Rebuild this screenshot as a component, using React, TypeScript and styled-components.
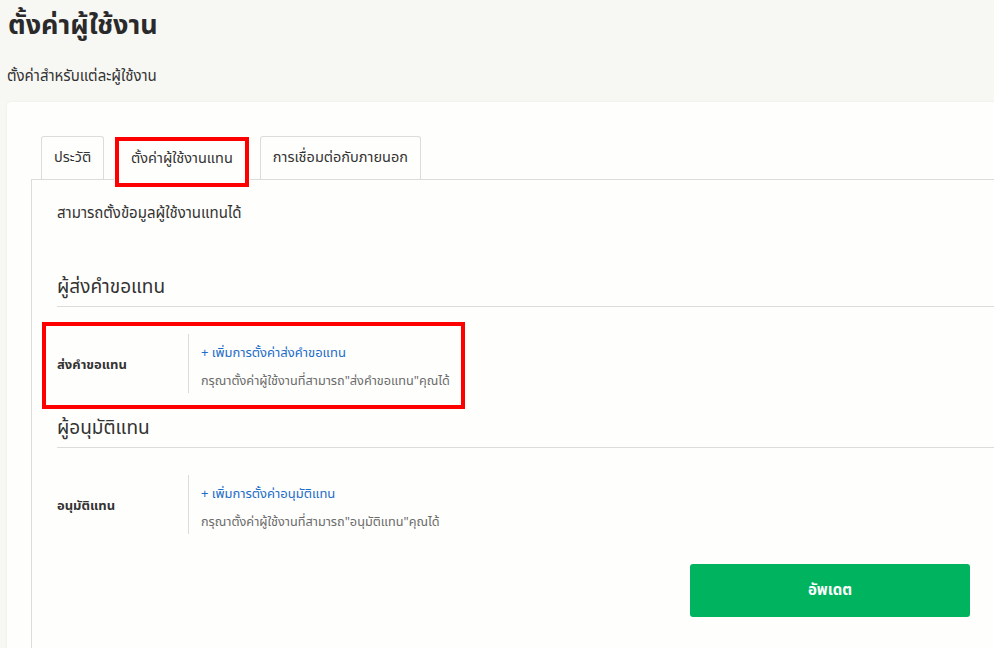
import React from 'react';
import styled, { createGlobalStyle } from 'styled-components';

const colors = {
    page: '#f7f7f4',
    card: '#fefefc',
    text: '#333333',
    hint: '#6b6b6b',
    line: '#dcdcdc',
    link: '#1d6cc8',
    green: '#00b35f',
    mark: '#ff0000',
};

const GlobalStyle = createGlobalStyle`
    html, body {
        margin: 0;
        padding: 0;
        background: ${colors.page};
        overflow: hidden;
    }
    body {
        font-family: Tahoma, "Noto Sans Thai", "Noto Sans", "DejaVu Sans", sans-serif;
        color: ${colors.text};
    }
`;

interface DelegateRowProps {
    label: string;
    linkText: string;
    hint: string;
    marked?: boolean;
}

const DelegateRow = ({ label, linkText, hint, marked }: DelegateRowProps) => (
    <Row $marked={marked}>
        <RowLabel>{label}</RowLabel>
        <RowBody>
            <AddLink href="#">+ {linkText}</AddLink>
            <Hint>{hint}</Hint>
        </RowBody>
    </Row>
);

const tabs = ['ประวัติ', 'ตั้งค่าผู้ใช้งานแทน', 'การเชื่อมต่อกับภายนอก'];

const App = () => {
    return (
        <Page>
            <GlobalStyle />
            <Title>ตั้งค่าผู้ใช้งาน</Title>
            <Subtitle>ตั้งค่าสำหรับแต่ละผู้ใช้งาน</Subtitle>
            <Card>
                <TabList>
                    {tabs.map((t, i) => (
                        <Tab key={t} $active={i === 1}>
                            {t}
                        </Tab>
                    ))}
                </TabList>
                <Panel>
                    <Intro>สามารถตั้งข้อมูลผู้ใช้งานแทนได้</Intro>
                    <SectionTitle>ผู้ส่งคำขอแทน</SectionTitle>
                    <DelegateRow
                        marked
                        label="ส่งคำขอแทน"
                        linkText="เพิ่มการตั้งค่าส่งคำขอแทน"
                        hint={'กรุณาตั้งค่าผู้ใช้งานที่สามารถ"ส่งคำขอแทน"คุณได้'}
                    />
                    <SectionTitle $tight>ผู้อนุมัติแทน</SectionTitle>
                    <DelegateRow
                        label="อนุมัติแทน"
                        linkText="เพิ่มการตั้งค่าอนุมัติแทน"
                        hint={'กรุณาตั้งค่าผู้ใช้งานที่สามารถ"อนุมัติแทน"คุณได้'}
                    />
                    <ButtonRow>
                        <UpdateButton>อัพเดต</UpdateButton>
                    </ButtonRow>
                </Panel>
            </Card>
        </Page>
    );
};

export default App;

const Page = styled.div`
    padding: 0 0 0 7px;
    height: 648px;
    overflow: hidden;
`;

const Title = styled.h1`
    margin: 0;
    padding: 10px 0 0 1px;
    font-size: 27px;
    font-weight: 700;
    line-height: 32px;
    color: #2a2a2a;
`;

const Subtitle = styled.p`
    margin: 0;
    padding-top: 26px;
    font-size: 15px;
    line-height: 18px;
`;

const Card = styled.div`
    margin-top: 16px;
    width: 1030px;
    background: ${colors.card};
    border-radius: 4px;
    box-shadow: 0 0 2px rgba(0, 0, 0, 0.08);
    padding: 34px 0 0 24px;
    box-sizing: border-box;
    height: 560px;
`;

const TabList = styled.div`
    display: flex;
    gap: 10px;
    padding-left: 10px;
    height: 43px;
`;

const Tab = styled.div<{ $active?: boolean }>`
    position: relative;
    display: flex;
    align-items: center;
    padding: 0 ${(p) => (p.$active ? '16px' : '12px')};
    font-size: 14.5px;
    border: 1px solid ${(p) => (p.$active ? 'transparent' : colors.line)};
    border-bottom: none;
    border-radius: 3px 3px 0 0;
    background: ${colors.card};
    margin-bottom: ${(p) => (p.$active ? '-1px' : '0')};
    z-index: 1;

    ${(p) =>
        p.$active &&
        `
        &::after {
            content: '';
            position: absolute;
            left: 0;
            right: 0;
            top: 0;
            bottom: -7px;
            border: 4px solid ${colors.mark};
        }
    `}
`;

const Panel = styled.div`
    border-top: 1px solid ${colors.line};
    border-left: 1px solid ${colors.line};
    padding: 25px 0 30px 25px;
    height: 100%;
    box-sizing: border-box;
`;

const Intro = styled.p`
    margin: 0;
    font-size: 15px;
    line-height: 18px;
`;

const SectionTitle = styled.h2<{ $tight?: boolean }>`
    margin: ${(p) => (p.$tight ? '4px' : '53px')} 0 0;
    padding-bottom: 6px;
    font-size: 19px;
    font-weight: 400;
    line-height: 24px;
    border-bottom: 1px solid ${colors.line};
`;

const Row = styled.div<{ $marked?: boolean }>`
    position: relative;
    display: flex;
    align-items: center;
    margin-top: 27px;
    margin-bottom: 24px;

    ${(p) =>
        p.$marked &&
        `
        &::after {
            content: '';
            position: absolute;
            left: -15px;
            width: 423px;
            top: -12px;
            bottom: -16px;
            border: 4px solid ${colors.mark};
            box-sizing: border-box;
        }
    `}
`;

const RowLabel = styled.div`
    width: 131px;
    font-size: 13px;
    font-weight: 700;
    padding-top: 2px;
`;

const RowBody = styled.div`
    display: flex;
    flex-direction: column;
    gap: 13px;
    padding: 11px 0 3px 12px;
    border-left: 1px solid ${colors.line};
`;

const AddLink = styled.a`
    font-size: 13px;
    line-height: 16px;
    color: ${colors.link};
    text-decoration: none;
`;

const Hint = styled.span`
    font-size: 12.7px;
    line-height: 16px;
    color: ${colors.hint};
`;

const ButtonRow = styled.div`
    display: flex;
    justify-content: flex-end;
    padding-right: 67px;
    margin-top: 30px;
`;

const UpdateButton = styled.button`
    width: 280px;
    height: 53px;
    border: none;
    border-radius: 3px;
    background: ${colors.green};
    color: #ffffff;
    font-family: inherit;
    font-size: 15px;
    font-weight: 700;
    cursor: pointer;
`;
